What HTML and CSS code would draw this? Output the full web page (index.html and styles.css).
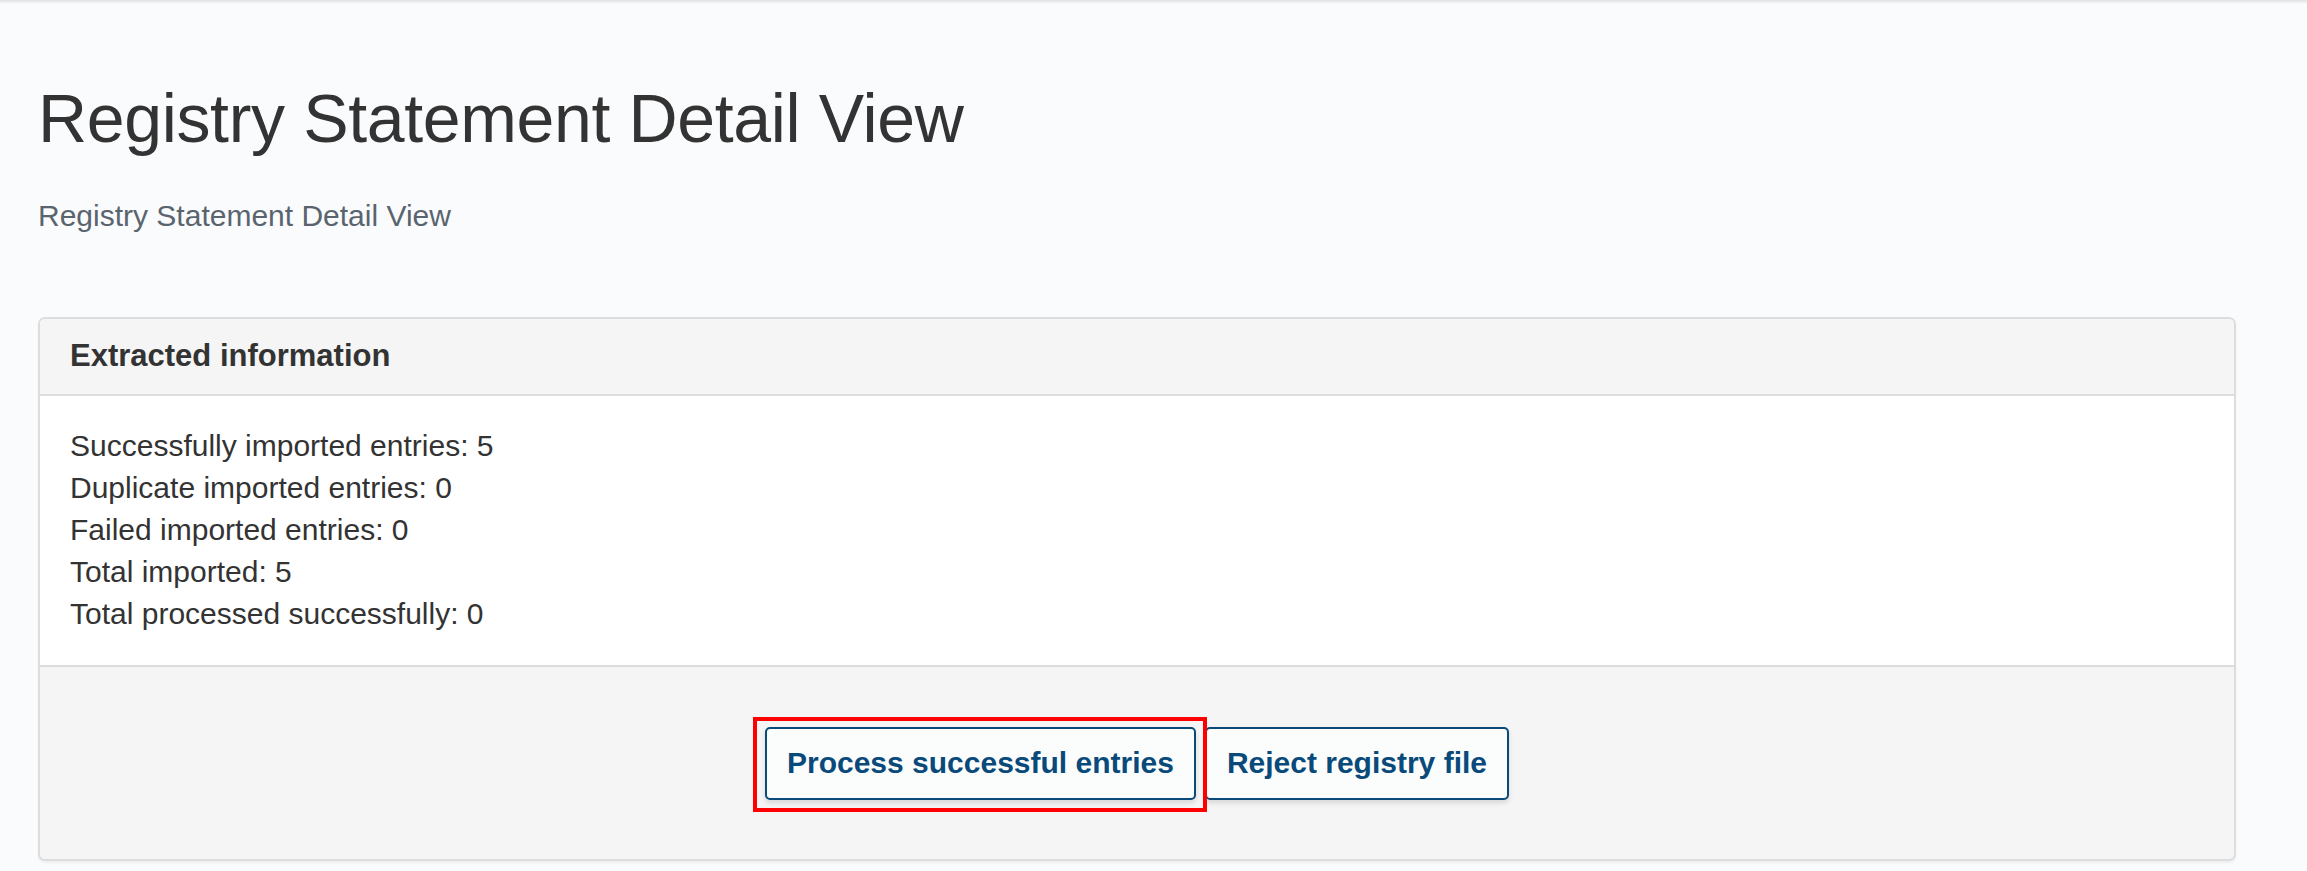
FILE: index.html
```html
<!DOCTYPE html>
<html lang="en">
<head>
<meta charset="utf-8">
<title>Registry Statement Detail View</title>
<link rel="stylesheet" href="styles.css">
</head>
<body>
<div class="topbar"></div>
<main class="page">
  <h1 class="title">Registry Statement Detail View</h1>
  <p class="subtitle">Registry Statement Detail View</p>
  <section class="panel">
    <div class="panel-heading">Extracted information</div>
    <div class="panel-body">
      <div class="line">Successfully imported entries: 5</div>
      <div class="line">Duplicate imported entries: 0</div>
      <div class="line">Failed imported entries: 0</div>
      <div class="line">Total imported: 5</div>
      <div class="line">Total processed successfully: 0</div>
    </div>
    <div class="panel-footer">
      <button class="btn btn-marked" type="button">Process successful entries</button>
      <button class="btn" type="button">Reject registry file</button>
    </div>
  </section>
</main>
</body>
</html>
```

FILE: styles.css
```css
html, body {
  margin: 0;
  padding: 0;
}
body {
  background: #fafbfd;
  font-family: "Liberation Sans", Arial, sans-serif;
  color: #333333;
  width: 2307px;
  height: 871px;
  overflow: hidden;
}
.topbar {
  height: 4px;
  background: linear-gradient(to bottom, rgba(0,0,0,0.10), rgba(0,0,0,0));
}
.page {
  padding: 74px 71px 0 38px;
}
.title {
  margin: 0;
  font-weight: normal;
  font-size: 68px;
  line-height: 80px;
  letter-spacing: -0.35px;
  color: #333333;
}
.subtitle {
  margin: 38px 0 0 0;
  font-size: 30px;
  line-height: 40px;
  color: #5a646e;
}
.panel {
  margin-top: 81px;
  border: 2px solid #dddddd;
  border-radius: 7px;
  background: #ffffff;
  box-shadow: 0 2px 2px rgba(0,0,0,0.05);
}
.panel-heading {
  background: #f5f5f5;
  border-bottom: 2px solid #dddddd;
  border-radius: 5px 5px 0 0;
  padding: 16px 30px 17px 30px;
  font-size: 31px;
  line-height: 42px;
  font-weight: bold;
  color: #333333;
}
.panel-body {
  padding: 29px 30px 30px 30px;
  font-size: 30px;
  line-height: 42px;
  color: #333333;
}
.panel-footer {
  background: #f5f5f5;
  border-top: 2px solid #dddddd;
  border-radius: 0 0 5px 5px;
  padding: 60px 30px 59px 30px;
  display: flex;
  justify-content: center;
  gap: 9px;
}
.btn {
  font-family: "Liberation Sans", Arial, sans-serif;
  font-weight: bold;
  font-size: 30px;
  line-height: 42px;
  color: #0a4a7a;
  background: #fbfdfd;
  border: 2px solid #0a4a7a;
  border-radius: 5px;
  padding: 13px 20px 14px 20px;
  box-shadow: 0 3px 5px rgba(0,0,0,0.12);
  cursor: pointer;
}
.btn-marked {
  position: relative;
}
.btn-marked::after {
  content: "";
  position: absolute;
  top: -12px;
  right: -13px;
  bottom: -14px;
  left: -14px;
  border: 4px solid #ff0000;
  pointer-events: none;
}
```
